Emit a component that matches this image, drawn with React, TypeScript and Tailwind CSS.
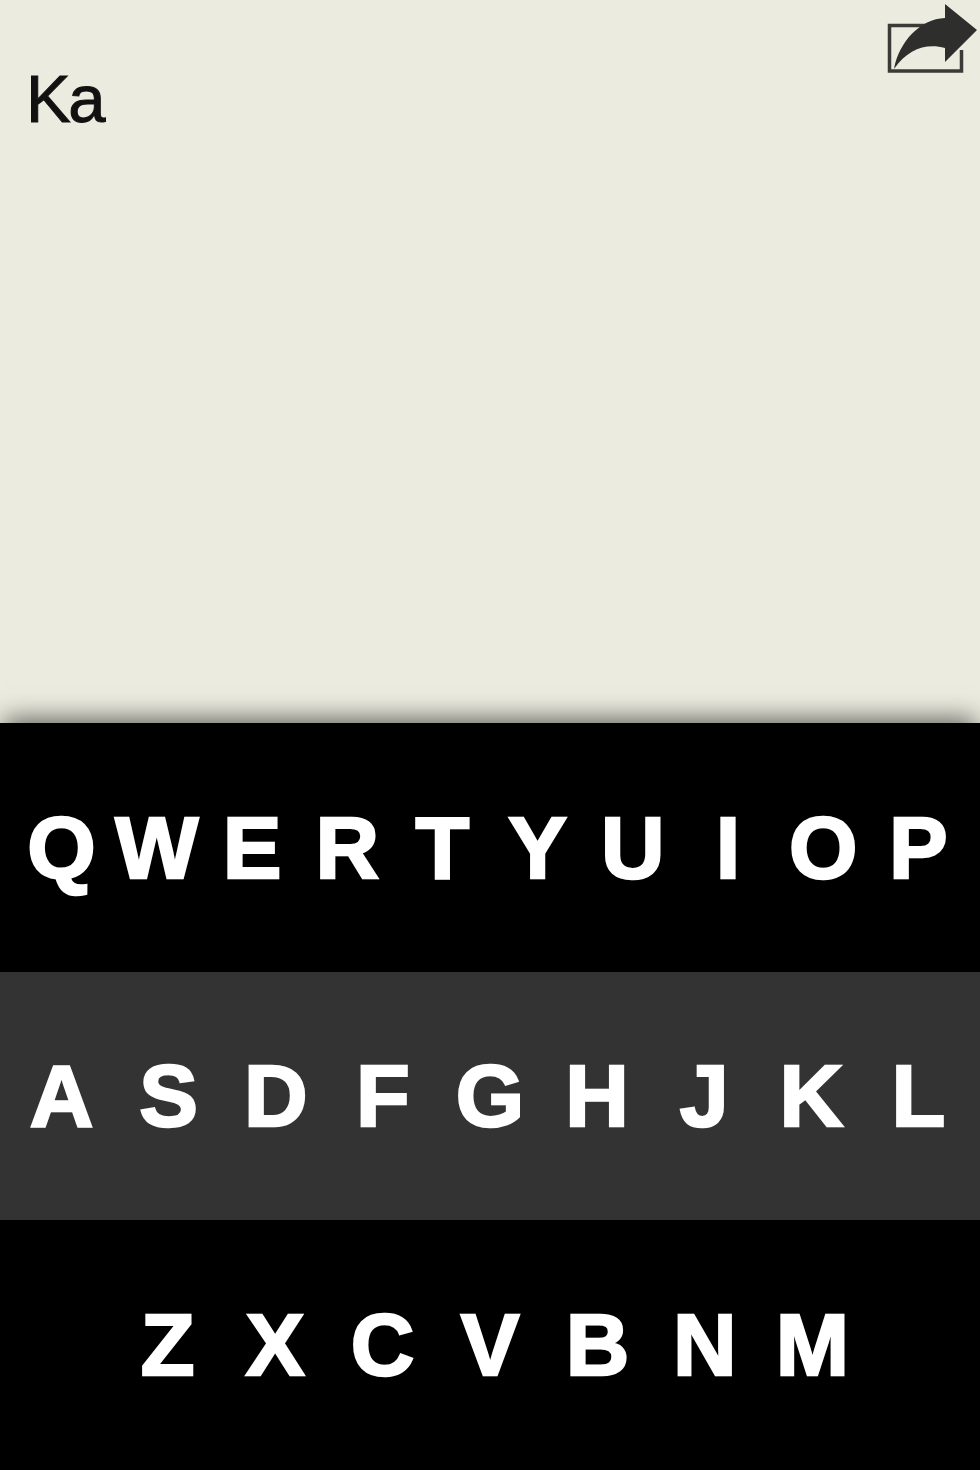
const rows = [
  { letters: "QWERTYUIOP".split(""), bg: "bg-black", h: "h-[249px]", grid: "grid-cols-10 px-[14px]" },
  { letters: "ASDFGHJKL".split(""), bg: "bg-[#333333]", h: "h-[248px]", grid: "grid-cols-9 px-[8px]" },
  { letters: "ZXCVBNM".split(""), bg: "bg-black", h: "h-[250px]", grid: "grid-cols-7 px-[114px]" },
];

function ShareIcon() {
  return (
    <svg viewBox="0 0 100 76" className="w-[100px] h-[76px]" aria-hidden="true">
      <path d="M46 25.5H9.5V71H81.5V50" fill="none" stroke="#3a3a36" strokeWidth="3.5" />
      <path d="M14 69C19 42 40 19 65 18V4L97 30L65 62V48C46 43 28 49 14 69Z" fill="#2e2e2c" />
    </svg>
  );
}

export default function App() {
  return (
    <div className="w-[980px] h-[1470px] flex flex-col overflow-hidden bg-[#ecebdf] font-['Liberation_Sans',Arial,sans-serif]">
      <div className="h-[723px] flex justify-between items-start pl-[26px]">
        <div className="mt-[61px] text-[67px] leading-[76px] text-[#111111] tracking-[-2.5px] [-webkit-text-stroke:1px_#111111]">Ka</div>
        <ShareIcon />
      </div>
      <div className="relative flex flex-col shadow-[0_-8px_24px_-4px_rgba(0,0,0,0.6)]">
        {rows.map((row) => (
          <div key={row.letters[0]} className={`grid items-center ${row.grid} ${row.bg} ${row.h}`}>
            {row.letters.map((l) => (
              <span key={l} className="text-center text-white font-bold text-[88px] leading-none [-webkit-text-stroke:2.5px_white]">
                {l}
              </span>
            ))}
          </div>
        ))}
      </div>
    </div>
  );
}
